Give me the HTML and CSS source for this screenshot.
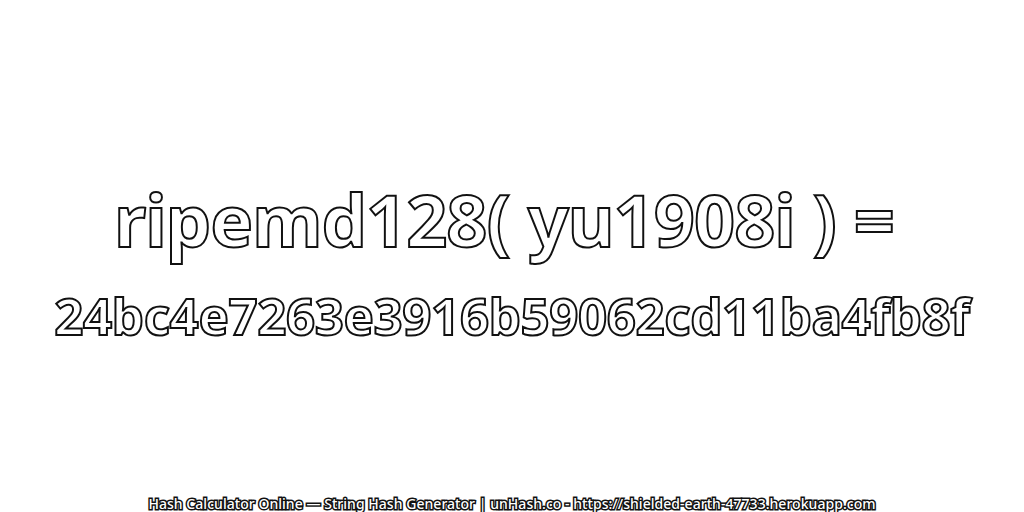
FILE: index.html
```html
<!DOCTYPE html>
<html lang="en">
<head>
<meta charset="utf-8">
<title>ripemd128</title>
<link rel="stylesheet" href="styles.css">
</head>
<body>
<main class="page">
<div class="center">
<h1 class="line one">ripemd128( yu1908i ) =</h1>
<p class="line two">24bc4e7263e3916b59062cd11ba4fb8f</p>
</div>
<footer class="foot">Hash Calculator Online — String Hash Generator | unHash.co - https://shielded-earth-47733.herokuapp.com</footer>
</main>
</body>
</html>
```
FILE: styles.css
```css
html, body { margin: 0; height: 100%; background: #fff; }
.page { width: 1024px; height: 512px; display: flex; flex-direction: column; align-items: center; overflow: hidden; font-family: "Noto Sans", "DejaVu Sans", sans-serif; }
.center { flex: 1; display: flex; flex-direction: column; align-items: center; padding-top: 170px; }
.line { margin: 0; font-weight: 700; color: #fff; -webkit-text-stroke: 2px #111; white-space: nowrap; }
.one { font-size: 72px; line-height: 98px; letter-spacing: -1px; padding-right: 16px; }
.two { font-size: 51px; line-height: 94px; letter-spacing: -0.4px; }
.foot { font-size: 14px; font-weight: 500; line-height: 18px; letter-spacing: 0.04px; color: #fff; -webkit-text-stroke: 3px #111; paint-order: stroke fill; white-space: nowrap; transform: translateY(1px); }
```
